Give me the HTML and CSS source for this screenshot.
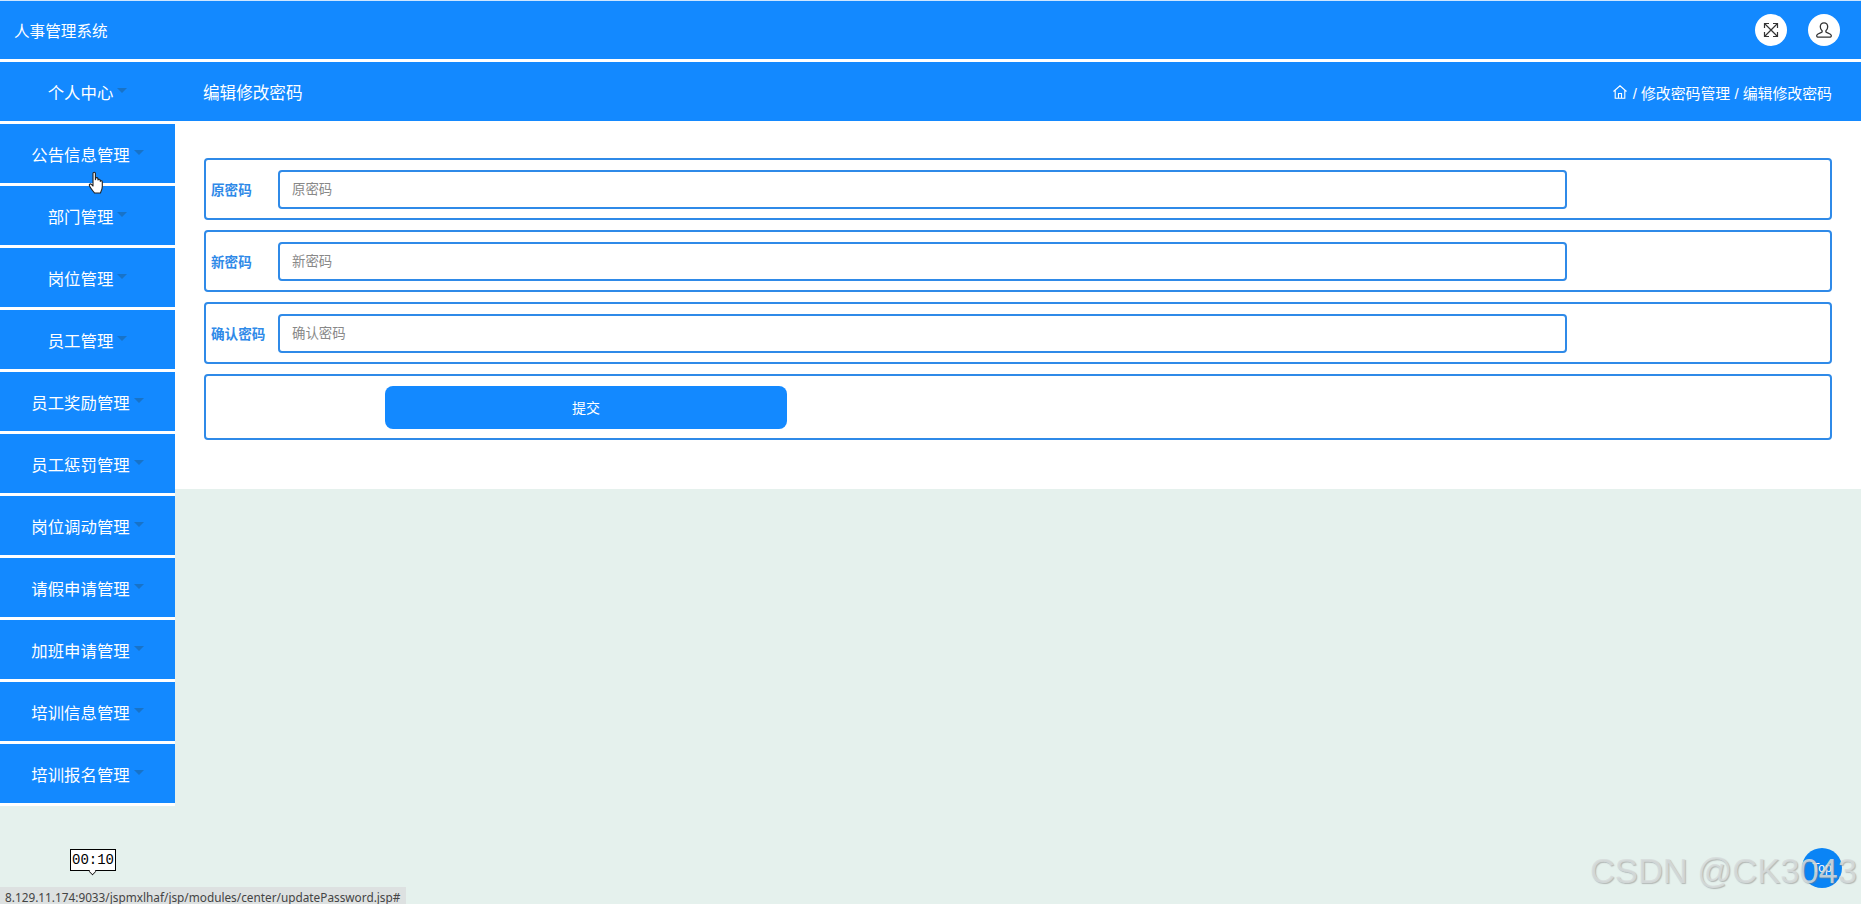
FILE: index.html
```html
<!DOCTYPE html>
<html lang="zh-CN">
<head>
    <meta charset="UTF-8">
    <meta name="viewport" content="width=device-width, initial-scale=1.0">
    <title>人事管理系统</title>
    <link rel="stylesheet" href="styles.css">
</head>
<body>
    <header class="topbar">
        <div class="brand">人事管理系统</div>
        <div class="top-actions">
            <span class="round-btn">
                <svg viewBox="0 0 18 18" width="18" height="18" fill="none" stroke="#333" stroke-width="1.2">
                    <path d="M3 3l12 12M15 3L3 15"/>
                    <path d="M2.5 7V2.5H7M11 2.5h4.500V7M15.500 11v4.500H11M7 15.500H2.500V11"/>
                </svg>
            </span>
            <span class="round-btn">
                <svg viewBox="0 0 18 18" width="18" height="18" fill="none" stroke="#333" stroke-width="1.300">
                    <path d="M9 1.800c2.300 0 3.700 1.700 3.700 4 0 1.700-.8 3.100-1.800 3.900v1.200c0 .7 4.900 1.500 5.300 3.300.2.900-.1 2-1 2H2.800c-.9 0-1.200-1.100-1-2 .4-1.800 5.300-2.600 5.300-3.300V9.700c-1-.8-1.800-2.200-1.800-3.900 0-2.300 1.400-4 3.700-4z"/>
                </svg>
            </span>
        </div>
    </header>

    <div class="layout">
        <aside class="sidebar">
            <a class="side-item">个人中心<i class="caret"></i></a>
            <a class="side-item">公告信息管理<i class="caret"></i></a>
            <a class="side-item">部门管理<i class="caret"></i></a>
            <a class="side-item">岗位管理<i class="caret"></i></a>
            <a class="side-item">员工管理<i class="caret"></i></a>
            <a class="side-item">员工奖励管理<i class="caret"></i></a>
            <a class="side-item">员工惩罚管理<i class="caret"></i></a>
            <a class="side-item">岗位调动管理<i class="caret"></i></a>
            <a class="side-item">请假申请管理<i class="caret"></i></a>
            <a class="side-item">加班申请管理<i class="caret"></i></a>
            <a class="side-item">培训信息管理<i class="caret"></i></a>
            <a class="side-item">培训报名管理<i class="caret"></i></a>
        </aside>

        <main class="content">
            <div class="page-title">
                <h1>编辑修改密码</h1>
                <div class="crumbs">
                    <svg viewBox="0 0 16 16" width="16" height="16" fill="none" stroke="#fff" stroke-width="1.100">
                        <path d="M1.500 7.500L8 1.800l6.500 5.700M3.200 6.500v7.700h9.600V6.500M6.500 14.200V9.500h3v4.700"/>
                    </svg>
                    <span>/ 修改密码管理 / 编辑修改密码</span>
                </div>
            </div>
            <form class="panel">
                <div class="form-row">
                    <label class="form-label">原密码</label>
                    <input class="form-input" type="password" placeholder="原密码">
                </div>
                <div class="form-row">
                    <label class="form-label">新密码</label>
                    <input class="form-input" type="password" placeholder="新密码">
                </div>
                <div class="form-row">
                    <label class="form-label">确认密码</label>
                    <input class="form-input" type="password" placeholder="确认密码">
                </div>
                <div class="form-row submit-row">
                    <button class="submit-btn" type="button">提交</button>
                </div>
            </form>
        </main>
    </div>

    <!-- 录屏时叠加的内容 -->
    <svg class="hand" viewBox="0 0 18 24" width="18" height="24" fill="#fff" stroke="#222" stroke-width="1.100" stroke-linejoin="round">
        <path d="M5 2.500c0-1.700 2.400-1.700 2.400 0v6.200l.3-1.300c.4-1.300 2.200-1 2.200.4l.1 1.200c.3-1.200 2.100-1 2.200.4l.1 1c.4-1 2-.7 2 .6v4.500c0 3-1.500 5.500-1.900 6.500H6.500C5.500 20.500 3 18 1.500 15c-.7-1.400.8-2.800 2-1.600L5 15z"/>
    </svg>
    <div class="time-tip">00:10</div>
    <div class="status-url">8.129.11.174:9033/jspmxlhaf/jsp/modules/center/updatePassword.jsp#</div>
    <a class="to-top">Top</a>
    <div class="watermark">CSDN @CK3043</div>
</body>
</html>
```

FILE: styles.css
```css
* {
    box-sizing: border-box;
}
html, body {
    height: 100%;
}
body {
    position: relative;
    margin: 0;
    overflow: hidden;
    background-color: #e5f1ed;
    color: #fff;
    font-family: "Liberation Sans", "Noto Sans CJK SC", sans-serif;
}
.topbar {
    display: flex;
    align-items: center;
    justify-content: space-between;
    height: 62px;
    padding: 0 21px 0 14px;
    background-color: #1389ff;
    border-top: 1px solid #cfe6ff;
    border-bottom: 3px solid #fff;
}
.brand {
    font-size: 15.6px;
}
.top-actions {
    display: flex;
    gap: 21px;
}
.round-btn {
    display: flex;
    align-items: center;
    justify-content: center;
    width: 32px;
    height: 32px;
    border-radius: 50%;
    background: #fff;
}
.layout {
    display: flex;
    align-items: flex-start;
}
.sidebar {
    flex: none;
    width: 175px;
    background: #fff;
}
.side-item {
    display: flex;
    align-items: center;
    justify-content: center;
    height: 62px;
    border-bottom: 3px solid #fff;
    background-color: #1389ff;
    background-clip: padding-box;
    font-size: 16.4px;
}
.caret {
    width: 0;
    height: 0;
    margin: -3px 0 0 4px;
    border-top: 5px solid #1873c8;
    border-left: 5px solid transparent;
    border-right: 5px solid transparent;
}
.content {
    flex: 1;
    min-width: 0;
}
.page-title {
    display: flex;
    align-items: center;
    justify-content: space-between;
    height: 62px;
    padding: 1px 29px 0 28px;
    background-color: #1389ff;
    background-clip: padding-box;
    border-bottom: 3px solid #fff;
}
.page-title h1 {
    margin: 0;
    font-size: 16.6px;
    font-weight: normal;
}
.crumbs {
    display: flex;
    align-items: center;
    gap: 5px;
    font-size: 14.9px;
}
.panel {
    padding: 34px 29px 49px;
    background: #fff;
}
.form-row {
    display: flex;
    align-items: center;
    height: 62px;
    margin-bottom: 10px;
    padding-left: 5px;
    border: 2px solid #2f8ae8;
    border-radius: 4px;
}
.form-label {
    flex: none;
    width: 67px;
    color: #2f8ae8;
    font-size: 13.6px;
    font-weight: bold;
}
.form-input {
    width: 1289px;
    height: 39px;
    padding: 0 12px;
    border: 2px solid #2f8ae8;
    border-radius: 4px;
    outline: none;
    font-family: inherit;
    font-size: 13.4px;
}
.form-input::placeholder {
    color: #888;
}
.submit-row {
    height: 66px;
    margin-bottom: 0;
    padding-left: 179px;
}
.submit-btn {
    width: 402px;
    height: 43px;
    border: none;
    border-radius: 8px;
    background-color: #1389ff;
    color: #fff;
    font-family: inherit;
    font-size: 14px;
}
.hand {
    position: absolute;
    left: 88px;
    top: 171px;
}
.time-tip {
    position: absolute;
    left: 70px;
    top: 849px;
    width: 46px;
    height: 22px;
    border: 1px solid #000;
    background: #fff;
    color: #000;
    font-family: "Liberation Mono", monospace;
    font-size: 14px;
    line-height: 20px;
    text-align: center;
}
.time-tip::after {
    content: "";
    position: absolute;
    left: 18px;
    top: 18px;
    width: 6px;
    height: 6px;
    border-right: 1px solid #000;
    border-bottom: 1px solid #000;
    background: #fff;
    transform: rotate(45deg) scale(0.75);
}
.status-url {
    position: absolute;
    left: 0;
    bottom: 0;
    width: 406px;
    height: 17px;
    padding-left: 5px;
    overflow: hidden;
    background: #dde1e1;
    color: #444;
    font-family: "Noto Sans", sans-serif;
    font-size: 11.8px;
    line-height: 21px;
    white-space: nowrap;
}
.to-top {
    position: absolute;
    left: 1802px;
    top: 848px;
    width: 40px;
    height: 40px;
    border-radius: 50%;
    background: #0a84f5;
    font-size: 12px;
    line-height: 40px;
    text-align: center;
}
.watermark {
    position: absolute;
    right: 4px;
    top: 851px;
    color: rgba(215, 220, 220, 0.85);
    font-size: 34.5px;
    line-height: 40px;
    text-shadow: 1px 1px 1px rgba(130, 130, 130, 0.5);
    white-space: nowrap;
}
```
